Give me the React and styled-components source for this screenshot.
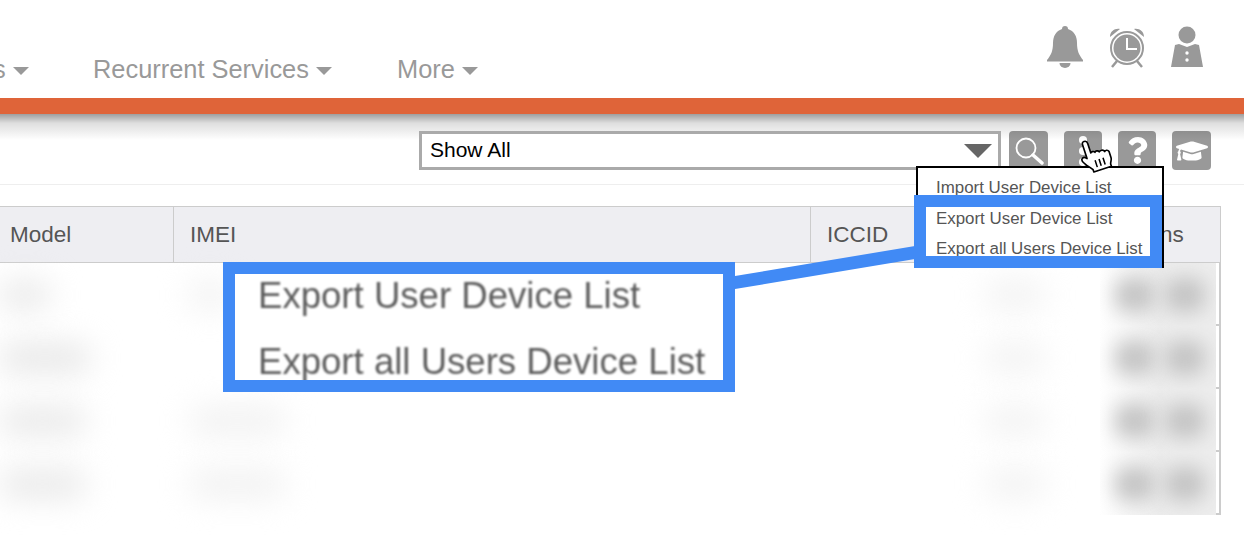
import styled, { createGlobalStyle } from "styled-components";
import { FaQuestion, FaGraduationCap } from "react-icons/fa";

const GlobalStyle = createGlobalStyle`
    * { box-sizing: border-box; }
    html, body { margin: 0; padding: 0; background: #fff; overflow: hidden; }
    body { font-family: "Liberation Sans", Arial, sans-serif; }
`

function BellIcon() {
    return (
        <svg width="36" height="42" viewBox="0 0 36 42" fill="#999">
            <path d="M18 0 c2 0 3 1 3 3 C27 5 30 10 30 17 c0 8 2 12 6 17 v1.5 H0 V34 c4-5 6-9 6-17 C6 10 9 5 15 3 c0-2 1-3 3-3z" />
            <path d="M12.5 37 a5.5 5 0 0 0 11 0z" />
        </svg>
    )
}

function ClockIcon() {
    return (
        <svg width="40" height="42" viewBox="0 0 40 42">
            <path d="M3 11 C3 5 8 2 13 3 Z M37 11 C37 5 32 2 27 3 Z" fill="#999" />
            <circle cx="20" cy="22" r="16" fill="none" stroke="#999" strokeWidth="2" />
            <circle cx="20" cy="22" r="13.5" fill="#999" />
            <path d="M20 12 V23 H30" fill="none" stroke="#fff" strokeWidth="2" />
            <path d="M10 35 L5 41 M30 35 L35 41" stroke="#999" strokeWidth="2.5" />
        </svg>
    )
}

function PersonIcon() {
    return (
        <svg width="32" height="42" viewBox="0 0 32 42">
            <circle cx="16" cy="9" r="8.5" fill="#999" />
            <path d="M8 18 L16 21 L24 18 L28 19 L32 41 H0 L4 19 Z" fill="#999" />
            <circle cx="16" cy="27" r="1.7" fill="#fff" />
            <circle cx="16" cy="34" r="1.7" fill="#fff" />
        </svg>
    )
}

function SearchIcon() {
    return (
        <svg width="30" height="30" viewBox="0 0 30 30" fill="none" stroke="#fff">
            <circle cx="12" cy="12" r="9.5" strokeWidth="1.8" />
            <path d="M19 19 L28 27" strokeWidth="3.4" strokeLinecap="round" />
        </svg>
    )
}

function DotsIcon() {
    return (
        <svg width="10" height="34" viewBox="0 0 10 34" fill="#fff">
            <circle cx="5" cy="6" r="4" />
            <circle cx="5" cy="17" r="4" />
            <circle cx="5" cy="28" r="4" />
        </svg>
    )
}

function HandIcon() {
    return (
        <svg width="37" height="38" viewBox="0 0 28 32">
            <path
                d="M8 2 c1.5 0 2.5 1 2.5 2.5 V13 c.5-1 3-1 3.5.5 c.5-1 3-1 3.5.7 c1-1 4-1 4.5 1.3 c.5-1 3-1 3.5 1 V22 c0 2-1.5 3-2 5 v2 H8 v-2 C6 24 2 20 1.5 17 c-.3-2 2-3 3.5-1.5 l1 1 V4.5 C6 3 6.5 2 8 2 z"
                fill="#fff"
                stroke="#000"
                strokeWidth="1.4"
                strokeLinejoin="round"
            />
            <path d="M12 20 V26 M15.5 20 V26 M19 20 V26" stroke="#000" strokeWidth="1.3" />
        </svg>
    )
}

function Connector() {
    return (
        <ConnectorSvg width="180" height="44" viewBox="0 0 180 44">
            <polygon points="0,30 0,43 180,13 180,0" fill="#418af5" />
        </ConnectorSvg>
    )
}

function BlurRow({ first, imei, tone }) {
    return (
        <Row>
            <RowContent>
                <BodyCell $w={173}>
                    <Blob $w={first} $tone={tone} />
                </BodyCell>
                <BodyCell $w={797} $pad={17}>
                    <Blob $w={imei} $tone="#f2f2f2" />
                </BodyCell>
                <BodyCell $w={130} $pad={15}>
                    <Blob $w={60} $tone="#f3f3f3" />
                </BodyCell>
                <ActionsCell>
                    <ActionBlob />
                    <ActionBlob />
                </ActionsCell>
            </RowContent>
            <RowEdge />
        </Row>
    )
}

export default function App() {
    return (
        <Page>
            <GlobalStyle />
            <Header>
                <Nav>
                    <NavItem $w={100}>s <Caret /></NavItem>
                    <NavItem $w={304}>Recurrent Services <Caret /></NavItem>
                    <NavItem>More <Caret /></NavItem>
                </Nav>
                <HeaderIcons>
                    <BellIcon />
                    <ClockIcon />
                    <PersonIcon />
                </HeaderIcons>
            </Header>
            <OrangeBar />

            <Toolbar>
                <SelectBox>
                    Show All
                    <SelectArrow />
                </SelectBox>
                <ToolButton $w={39}><SearchIcon /></ToolButton>
                <ToolButton><DotsIcon /></ToolButton>
                <ToolButton><FaQuestion size={27} /></ToolButton>
                <ToolButton $w={39}><FaGraduationCap size={32} /></ToolButton>
            </Toolbar>

            <TableHead>
                <HeadCell $w={174}>Model</HeadCell>
                <HeadCell $w={637} $pad={16}>IMEI</HeadCell>
                <HeadCell $w={283} $pad={16}>ICCID</HeadCell>
                <HeadCell $pad={16}>Actions</HeadCell>
            </TableHead>
            <TableBody>
                <BlurRow first={50} imei={40} tone="#eaeaea" />
                <BlurRow first={90} imei={0} tone="#e8e8e8" />
                <BlurRow first={85} imei={95} tone="#eaeaea" />
                <BlurRow first={85} imei={95} tone="#eaeaea" />
            </TableBody>

            <Dropdown>
                <DropdownItem>Import User Device List</DropdownItem>
                <DropdownItem>Export User Device List</DropdownItem>
                <DropdownItem>Export all Users Device List</DropdownItem>
            </Dropdown>
            <Highlight />
            <Connector />
            <Callout>
                <CalloutInner>
                    <CalloutLine>Export User Device List</CalloutLine>
                    <CalloutLine>Export all Users Device List</CalloutLine>
                </CalloutInner>
            </Callout>
            <Cursor><HandIcon /></Cursor>
        </Page>
    )
}

const Page = styled.div`
    position: relative;
    width: 1244px;
    height: 538px;
    overflow: hidden;
    background: #fff;
`
const Header = styled.header`
    height: 98px;
    display: flex;
    justify-content: space-between;
    align-items: flex-start;
    padding-right: 41px;
`
const Nav = styled.nav`
    display: flex;
    margin-top: 54px;
    margin-left: -7px;
`
const NavItem = styled.div`
    width: ${(p) => (p.$w ? `${p.$w}px` : "auto")};
    display: flex;
    align-items: center;
    gap: 7px;
    font-size: 25.4px;
    line-height: 30px;
    color: #999;
    white-space: nowrap;
`
const Caret = styled.span`
    width: 0;
    height: 0;
    margin-top: 3px;
    border-left: 8px solid transparent;
    border-right: 8px solid transparent;
    border-top: 8px solid #999;
`
const HeaderIcons = styled.div`
    display: flex;
    align-items: flex-start;
    gap: 24px;
    margin-top: 26px;
`
const OrangeBar = styled.div`
    position: relative;
    height: 16px;
    background: #df6439;

    &::after {
        content: "";
        position: absolute;
        left: 0;
        right: 0;
        top: 100%;
        height: 26px;
        background: linear-gradient(rgba(0, 0, 0, 0.38), rgba(0, 0, 0, 0.13) 35%, rgba(0, 0, 0, 0));
    }
`
const Toolbar = styled.div`
    height: 71px;
    display: flex;
    align-items: flex-start;
    justify-content: flex-end;
    gap: 16px;
    padding: 17px 33px 0 0;
    border-bottom: 1px solid #eee;
`
const SelectBox = styled.div`
    position: relative;
    width: 582px;
    height: 39px;
    margin-right: -8px;
    padding-left: 8px;
    border: 3px solid #aaa;
    background: #fff;
    font-size: 21px;
    line-height: 32px;
    color: #000;
`
const SelectArrow = styled.span`
    position: absolute;
    right: 6px;
    top: 10px;
    width: 0;
    height: 0;
    border-left: 14px solid transparent;
    border-right: 14px solid transparent;
    border-top: 14px solid #666;
`
const ToolButton = styled.div`
    width: ${(p) => p.$w || 38}px;
    height: 39px;
    display: flex;
    align-items: center;
    justify-content: center;
    border-radius: 4px;
    background: #999;
    color: #fff;
`
const TableHead = styled.div`
    width: 1221px;
    height: 57px;
    margin-top: 21px;
    display: flex;
    background: #eeeef2;
    border: 1px solid #ccc;
    border-left: 0;
`
const HeadCell = styled.div`
    width: ${(p) => (p.$w ? `${p.$w}px` : "auto")};
    flex: ${(p) => (p.$w ? "none" : "1")};
    padding-left: ${(p) => p.$pad || 10}px;
    font-size: 22.5px;
    line-height: 55px;
    color: #555;
    border-right: ${(p) => (p.$w ? "1px solid #ccc" : "0")};
`
const TableBody = styled.div`
    width: 1221px;
`
const Row = styled.div`
    height: 63px;
    display: flex;
`
const RowContent = styled.div`
    flex: 1;
    display: flex;
    align-items: center;
`
const RowEdge = styled.div`
    width: 5px;
    border-right: 2px solid #ccc;
    border-bottom: 2px solid #ccc;
`
const BodyCell = styled.div`
    width: ${(p) => p.$w}px;
    padding-left: ${(p) => p.$pad || 0}px;
`
const ActionsCell = styled.div`
    flex: 1;
    height: 100%;
    display: flex;
    align-items: center;
    gap: 10px;
    padding-left: 15px;
    overflow: hidden;
    background: linear-gradient(to right, #fff, #ededed 60px);
`
const Blob = styled.div`
    width: ${(p) => p.$w}px;
    height: 30px;
    border-radius: 12px;
    background: ${(p) => p.$tone};
    filter: blur(15px);
`
const ActionBlob = styled.div`
    width: 40px;
    height: 34px;
    border-radius: 12px;
    background: #c4c4c4;
    filter: blur(10px);
`
const Dropdown = styled.div`
    position: absolute;
    left: 916px;
    top: 166px;
    width: 248px;
    height: 102px;
    padding: 5px 0 0 18px;
    background: #fff;
    border: 2px solid #000;
`
const DropdownItem = styled.div`
    font-size: 16.9px;
    line-height: 30.5px;
    color: #555;
    white-space: nowrap;
`
const Highlight = styled.div`
    position: absolute;
    left: 914px;
    top: 195px;
    width: 248px;
    height: 73px;
    border: 12px solid #418af5;
`
const ConnectorSvg = styled.svg`
    position: absolute;
    left: 735px;
    top: 246px;
`
const Callout = styled.div`
    position: absolute;
    left: 223px;
    top: 262px;
    width: 512px;
    height: 130px;
    background: #fff;
    border: 12px solid #418af5;
`
const CalloutInner = styled.div`
    height: 106px;
    padding-left: 23px;
    overflow: hidden;
`
const CalloutLine = styled.div`
    margin-top: -11px;
    margin-bottom: 11px;
    font-size: 36.6px;
    line-height: 66px;
    color: #5c5c5c;
    white-space: nowrap;
    filter: blur(0.8px);
`
const Cursor = styled.div`
    position: absolute;
    left: 1078px;
    top: 136px;
    transform: rotate(-18deg);
`
